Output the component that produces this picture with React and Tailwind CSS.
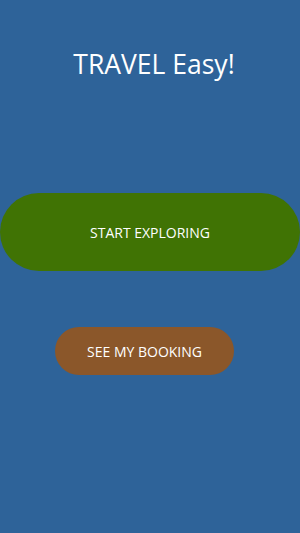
export default function App() {
  return (
    <div className="w-[300px] h-[533px] bg-[#2e6399] flex flex-col items-center font-['Open_Sans',sans-serif] text-white">
      <h1 className="mt-[46px] ml-[8px] h-[36px] text-[26.5px] leading-[36px]">TRAVEL Easy!</h1>
      <button className="mt-[111px] w-[300px] h-[78px] rounded-full bg-[#407304] text-[14px]">
        START EXPLORING
      </button>
      <button className="mt-[56px] ml-[-11px] w-[179px] h-[48px] rounded-full bg-[#8b572a] text-[14px]">
        SEE MY BOOKING
      </button>
    </div>
  )
}
